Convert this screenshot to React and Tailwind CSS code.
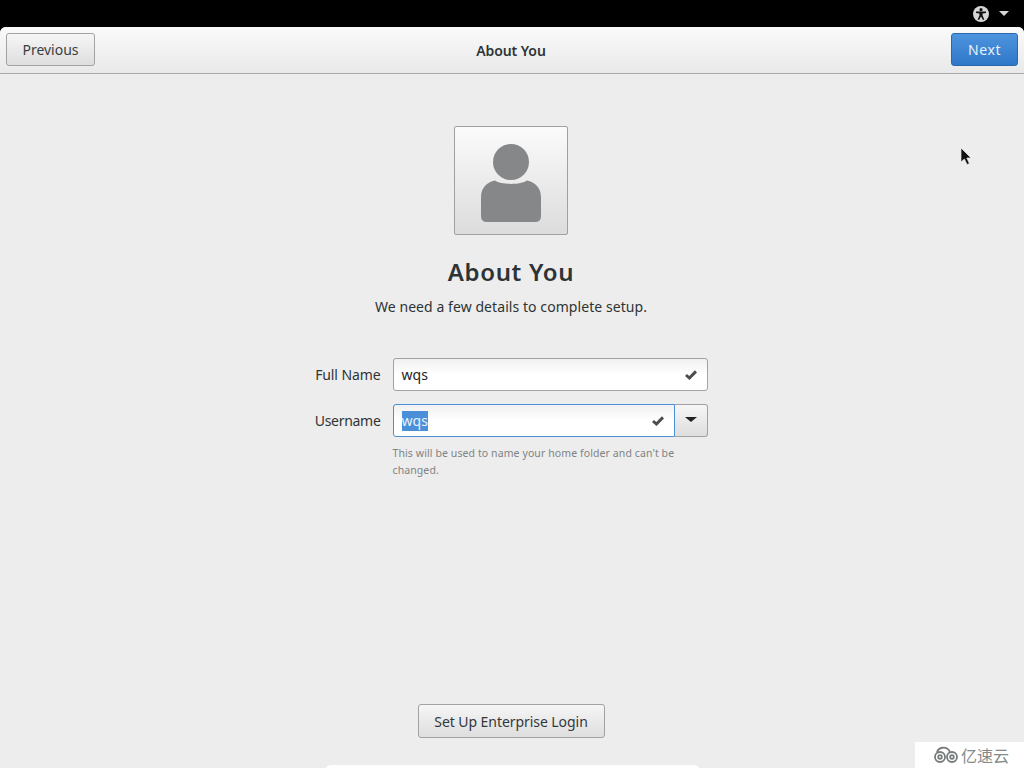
function Check({ className }) {
  return (
    <svg viewBox="0 0 12 10" className={className} fill="none" stroke="#4d4d4d" strokeWidth="3">
      <path d="M1 5 L4.4 8 L11 1.4" />
    </svg>
  );
}
export default function App() {
  return (
    <div className="relative h-[768px] w-[1024px] overflow-hidden bg-black font-['Noto_Sans','Open_Sans',sans-serif] text-[14px] text-[#2e3436]">
      <div className="flex h-[27px] items-center justify-end gap-[10px] pr-[15px]">
        <svg viewBox="0 0 16 16" className="h-[16px] w-[16px]">
          <circle cx="8" cy="8" r="8" fill="#d6d6d6" />
          <circle cx="8" cy="3.7" r="1.6" fill="#111" />
          <path d="M3 5.6 L13 5.6 L13 7 L9.6 7.6 L9.6 9.4 L11.3 13.4 L10 13.9 L8 10.4 L6 13.9 L4.7 13.4 L6.4 9.4 L6.4 7.6 L3 7 Z" fill="#111" />
        </svg>
        <div className="h-0 w-0 border-x-[5px] border-t-[5px] border-x-transparent border-t-[#d6d6d6]" />
      </div>
      <div className="flex h-[741px] flex-col overflow-hidden rounded-t-[6px] bg-[#ededed]">
        <header className="grid h-[47px] shrink-0 grid-cols-[1fr_auto_1fr] items-center border-b border-[#a8a8a8] bg-gradient-to-b from-[#fafafa] to-[#e9e9e9] pr-[6px] pb-[1px] pl-[6px]">
          <button className="h-[33px] w-[89px] justify-self-start rounded-[3px] border border-[#a2a2a2] bg-gradient-to-b from-[#f6f6f6] to-[#dedede] text-[14px] text-[#3a3f41]">Previous</button>
          <div className="mt-[1px] mr-[2px] text-[14px] font-semibold tracking-[-0.1px] text-[#2e3436]">About You</div>
          <button className="h-[33px] w-[67px] justify-self-end rounded-[3px] border border-[#2a68ad] bg-gradient-to-b from-[#4d94de] to-[#2f77c9] text-[14px] tracking-[0.6px] text-[#e6f1fb]">Next</button>
        </header>
        <main className="flex flex-1 flex-col items-center pt-[52px] pr-[2px]">
          <div className="flex h-[109px] w-[114px] items-center justify-center rounded-[2px] border border-[#a0a0a0] bg-gradient-to-b from-[#fbfbfb] to-[#dcdcdc]">
            <svg viewBox="0 0 60 78" className="mt-[5px] h-[78px] w-[60px]">
              <circle cx="30" cy="18" r="18" fill="#858788" />
              <path d="M14 36.5 C20 41 40 41 46 36.5 C54 38 60 44 60 53 L60 72 Q60 78 54 78 L6 78 Q0 78 0 72 L0 53 C0 44 6 38 14 36.5 Z" fill="#858788" />
            </svg>
          </div>
          <h1 className="mt-[20px] text-[24px] leading-[33px] font-semibold tracking-[0.65px] text-[#2e3436]">About You</h1>
          <p className="mt-[9px] text-[14px] leading-[20px] tracking-[0.07px] text-[#2e3436]">We need a few details to complete setup.</p>
          <div className="mt-[41px] grid w-[393px] grid-cols-[66px_315px] items-center gap-x-[12px] gap-y-[13px]">
            <label className="text-right text-[14px] whitespace-nowrap tracking-[-0.1px]">Full Name</label>
            <div className="flex h-[33px] items-center justify-between rounded-[3px] border border-[#a2a2a2] bg-gradient-to-b from-[#f1f1f1] via-white to-white pr-[10px] pl-[8px]">
              <span className="text-[14px] tracking-[0.1px] text-[#1f2325]">wqs</span>
              <Check className="h-[10px] w-[12px]" />
            </div>
            <label className="text-right text-[14px] whitespace-nowrap tracking-[-0.3px]">Username</label>
            <div className="flex h-[33px]">
              <div className="flex flex-1 items-center justify-between rounded-l-[3px] border border-[#4a90d9] bg-gradient-to-b from-[#f1f1f1] via-white to-white pr-[10px] pl-[8px]">
                <span className="bg-[#4a90d9] text-[14px] leading-[20px] tracking-[0.1px] text-[#eaf2fb]">wqs</span>
                <Check className="h-[10px] w-[12px]" />
              </div>
              <div className="flex w-[33px] items-center justify-center rounded-r-[3px] border border-l-0 border-[#a2a2a2] bg-gradient-to-b from-[#f6f6f6] to-[#dedede]">
                <div className="mb-[2px] h-0 w-0 border-x-[6px] border-t-[5px] border-x-transparent border-t-[#222]" />
              </div>
            </div>
            <p className="col-start-2 mt-[-5px] w-[300px] text-[10.5px] leading-[17px] tracking-[0.1px] text-[#7f8384]">This will be used to name your home folder and can't be changed.</p>
          </div>
          <button className="mt-auto mb-[30px] h-[34px] w-[187px] rounded-[3px] border border-[#a2a2a2] bg-gradient-to-b from-[#f6f6f6] to-[#dedede] text-[14px] tracking-[-0.06px] text-[#33383a]">Set Up Enterprise Login</button>
        </main>
      </div>
      <div className="absolute top-[765px] left-[325px] h-[10px] w-[375px] rounded-t-[6px] bg-white" />
      <svg viewBox="0 0 12 20" className="absolute top-[147px] left-[960px] h-[20px] w-[12px]">
        <path d="M1 1 L1 15 L4.4 12 L7 17.5 L9.4 16.5 L6.8 11 L11 11 Z" fill="#111" stroke="#e8e8e8" strokeWidth="0.7" />
      </svg>
      <div className="absolute right-0 bottom-0 flex h-[26px] w-[109px] items-center gap-[2px] bg-white pl-[18px] font-['Noto_Sans_CJK_SC',sans-serif] text-[16px] text-[#858a8a]">
        <svg viewBox="0 0 26 18" className="h-[18px] w-[26px]" fill="none" stroke="#777c7c" strokeWidth="1.8">
          <circle cx="7" cy="11" r="5" />
          <circle cx="7" cy="11" r="1.8" />
          <circle cx="19" cy="11" r="5" />
          <circle cx="19" cy="11" r="1.8" />
          <path d="M4 6.5 C5 1 14 -0.5 17 6" />
        </svg>
        <span>亿速云</span>
      </div>
    </div>
  );
}
